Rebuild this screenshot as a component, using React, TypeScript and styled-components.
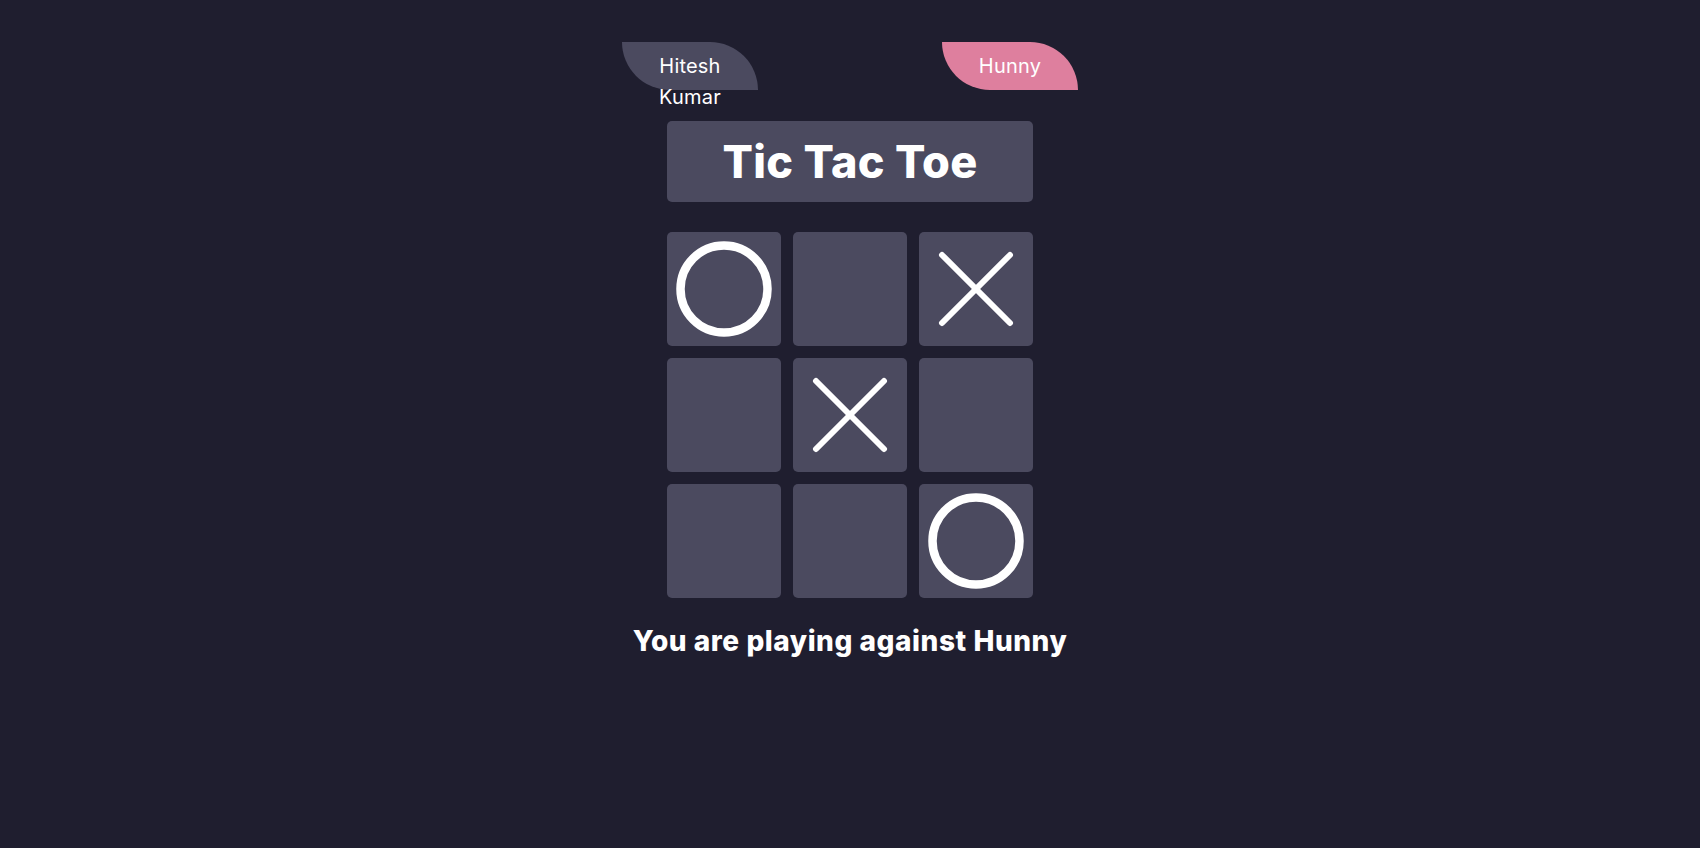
import React from "react";
import styled, { createGlobalStyle } from "styled-components";

const GlobalStyle = createGlobalStyle`
  html, body {
    margin: 0;
    padding: 0;
    background: #1f1e2f;
  }
  body {
    font-family: Inter, "Open Sans", "Noto Sans", sans-serif;
    color: #ffffff;
  }
`;

const Page = styled.div`
  min-height: 848px;
  background: #1f1e2f;
  display: flex;
  flex-direction: column;
  align-items: center;
  padding-top: 42px;
  box-sizing: border-box;
`;

const PlayerRow = styled.div`
  width: 456px;
  display: flex;
  justify-content: space-between;
  align-items: flex-start;
`;

const PlayerTab = styled.div<{ $active?: boolean }>`
  width: 136px;
  height: 48px;
  box-sizing: border-box;
  padding: 9px 30px 0;
  border-radius: 0 48px 0 48px;
  background: ${(p) => (p.$active ? "#de7f9e" : "#4b4a5f")};
  color: #ffffff;
  font-size: 20px;
  line-height: 31px;
  letter-spacing: 0.2px;
  text-align: center;
`;

const Title = styled.h1`
  margin: 31px 0 0;
  width: 366px;
  height: 81px;
  border-radius: 5px;
  background: #4b4a5f;
  display: flex;
  align-items: center;
  justify-content: center;
  font-size: 45px;
  font-weight: 800;
  letter-spacing: 0.3px;
`;

const Board = styled.div`
  margin-top: 30px;
  display: grid;
  grid-template-columns: repeat(3, 114px);
  grid-auto-rows: 114px;
  gap: 12px;
`;

const Cell = styled.div`
  background: #4b4a5f;
  border-radius: 5px;
  display: flex;
  align-items: center;
  justify-content: center;
`;

const Status = styled.p`
  margin: 26px 0 0;
  font-size: 28px;
  font-weight: 800;
  letter-spacing: 0.55px;
`;

const Circle = () => (
  <svg width="96" height="96" viewBox="0 0 96 96">
    <circle cx="48" cy="48" r="43.5" fill="none" stroke="#fff" strokeWidth="8.5" />
  </svg>
);

const Cross = () => (
  <svg width="76" height="76" viewBox="0 0 76 76">
    <g stroke="#fff" strokeWidth="6" strokeLinecap="round">
      <line x1="4" y1="4" x2="72" y2="72" />
      <line x1="72" y1="4" x2="4" y2="72" />
    </g>
  </svg>
);

const board: ("O" | "X" | "")[] = ["O", "", "X", "", "X", "", "", "", "O"];

export default function App() {
  return (
    <>
      <GlobalStyle />
      <Page>
        <PlayerRow>
          <PlayerTab>Hitesh Kumar</PlayerTab>
          <PlayerTab $active>Hunny</PlayerTab>
        </PlayerRow>
        <Title>Tic Tac Toe</Title>
        <Board>
          {board.map((v, i) => (
            <Cell key={i}>{v === "O" ? <Circle /> : v === "X" ? <Cross /> : null}</Cell>
          ))}
        </Board>
        <Status>You are playing against Hunny</Status>
      </Page>
    </>
  );
}
